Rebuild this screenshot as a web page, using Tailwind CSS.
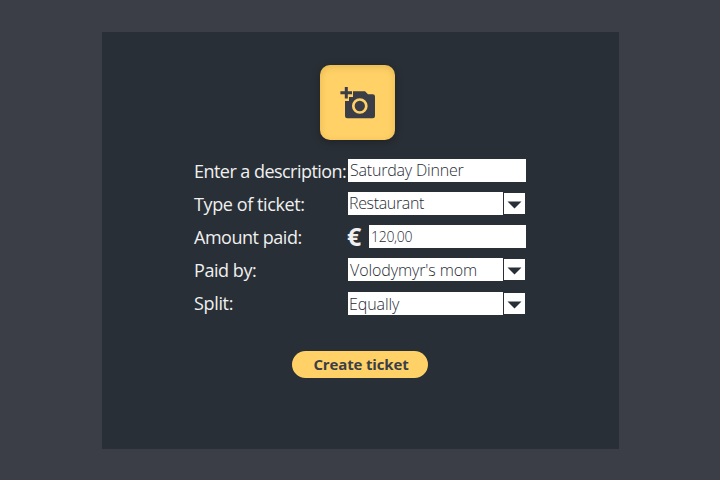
<!DOCTYPE html>
<html lang="en">
<head>
<meta charset="utf-8">
<title>Create ticket</title>
<script src="https://cdn.jsdelivr.net/npm/@tailwindcss/browser@4"></script>
</head>
<body class="bg-[#3b3e47] font-['Open_Sans','Noto_Sans',sans-serif] w-[720px] h-[480px] overflow-hidden pt-8 pl-[102px]">
<main class="w-[517px] h-[417px] bg-[#292f36] flex flex-col pt-[33px]">
  <button aria-label="Add photo" class="ml-[218px] size-[75px] shrink-0 rounded-[10px] bg-[#ffd166] shadow-[0_2px_8px_rgba(0,0,0,0.28),inset_0_2px_7px_rgba(120,80,0,0.2)]">
    <svg class="size-[75px]" viewBox="0 0 75 75" fill="none">
      <path fill="#3b3e47" d="M25 36V51Q25 53.3 27.3 53.3H52.7Q55 53.3 55 51V31.5Q55 29.3 52.7 29.3H48L45 26.3H33V32H29V36Z"/>
      <path fill="#3b3e47" stroke="#ffd166" stroke-width="1.6" paint-order="stroke" d="M24.8 22H27.8V26.3H32V29.3H27.8V33.6H24.8V29.3H20.4V26.3H24.8Z"/>
      <circle cx="39.8" cy="41" r="6.5" stroke="#ffd166" stroke-width="2.7"/>
    </svg>
  </button>
  <form class="mt-[19px] ml-[92px] grid grid-cols-[154px_178px] grid-rows-[23px_23px_23px_23px_23px] gap-y-[10px] leading-[23px] text-[16px] tracking-[-0.15px] text-[#292c36] whitespace-nowrap">
    <label class="text-[18px] text-[#f0f0f0] pt-px tracking-[-0.54px]">Enter a description:</label>
    <div class="bg-white pl-[2px] font-light tracking-[-0.2px]">Saturday Dinner</div>
    <label class="text-[18px] text-[#f0f0f0] pt-px tracking-[-0.4px]">Type of ticket:</label>
    <div class="flex"><div class="w-[155px] bg-white pl-px font-light tracking-[-0.35px]">Restaurant</div><div class="ml-px mt-px w-[21px] h-[21px] bg-white"><svg class="size-[21px]" viewBox="0 0 21 21"><path fill="#292f36" d="M3.5 8.5H17.5L10.5 15.5Z"/></svg></div></div>
    <label class="text-[18px] text-[#f0f0f0] pt-px tracking-[-0.47px]">Amount paid:</label>
    <div class="flex"><b class="w-[21px] text-[25px] text-[#f0f0f0] -ml-px mr-px">€</b><div class="flex-1 bg-white pl-[2px] pt-px leading-[22px] text-[14px] font-light tracking-[-0.3px]">120,00</div></div>
    <label class="text-[18px] text-[#f0f0f0] pt-px tracking-[-0.45px]">Paid by:</label>
    <div class="flex"><div class="w-[155px] bg-white pl-[2px] pt-px font-light tracking-[-0.1px]">Volodymyr's mom</div><div class="ml-px mt-px w-[21px] h-[21px] bg-white"><svg class="size-[21px]" viewBox="0 0 21 21"><path fill="#292f36" d="M3.5 8.5H17.5L10.5 15.5Z"/></svg></div></div>
    <label class="text-[18px] text-[#f0f0f0] pt-px tracking-[-0.35px]">Split:</label>
    <div class="flex pt-px h-6"><div class="w-[155px] bg-white pl-px pt-px leading-[22px] font-light tracking-[-0.1px]">Equally</div><div class="ml-px mt-px w-[21px] h-[21px] bg-white"><svg class="size-[21px]" viewBox="0 0 21 21"><path fill="#292f36" d="M3.5 8.5H17.5L10.5 15.5Z"/></svg></div></div>
  </form>
  <button class="mt-[37px] ml-[190px] w-[136px] h-[27px] shrink-0 rounded-full bg-[#ffd166] text-[#3b3e47] text-[15px] font-bold leading-[27px] pl-[2px] tracking-[-0.15px]">Create ticket</button>
</main>
</body>
</html>
